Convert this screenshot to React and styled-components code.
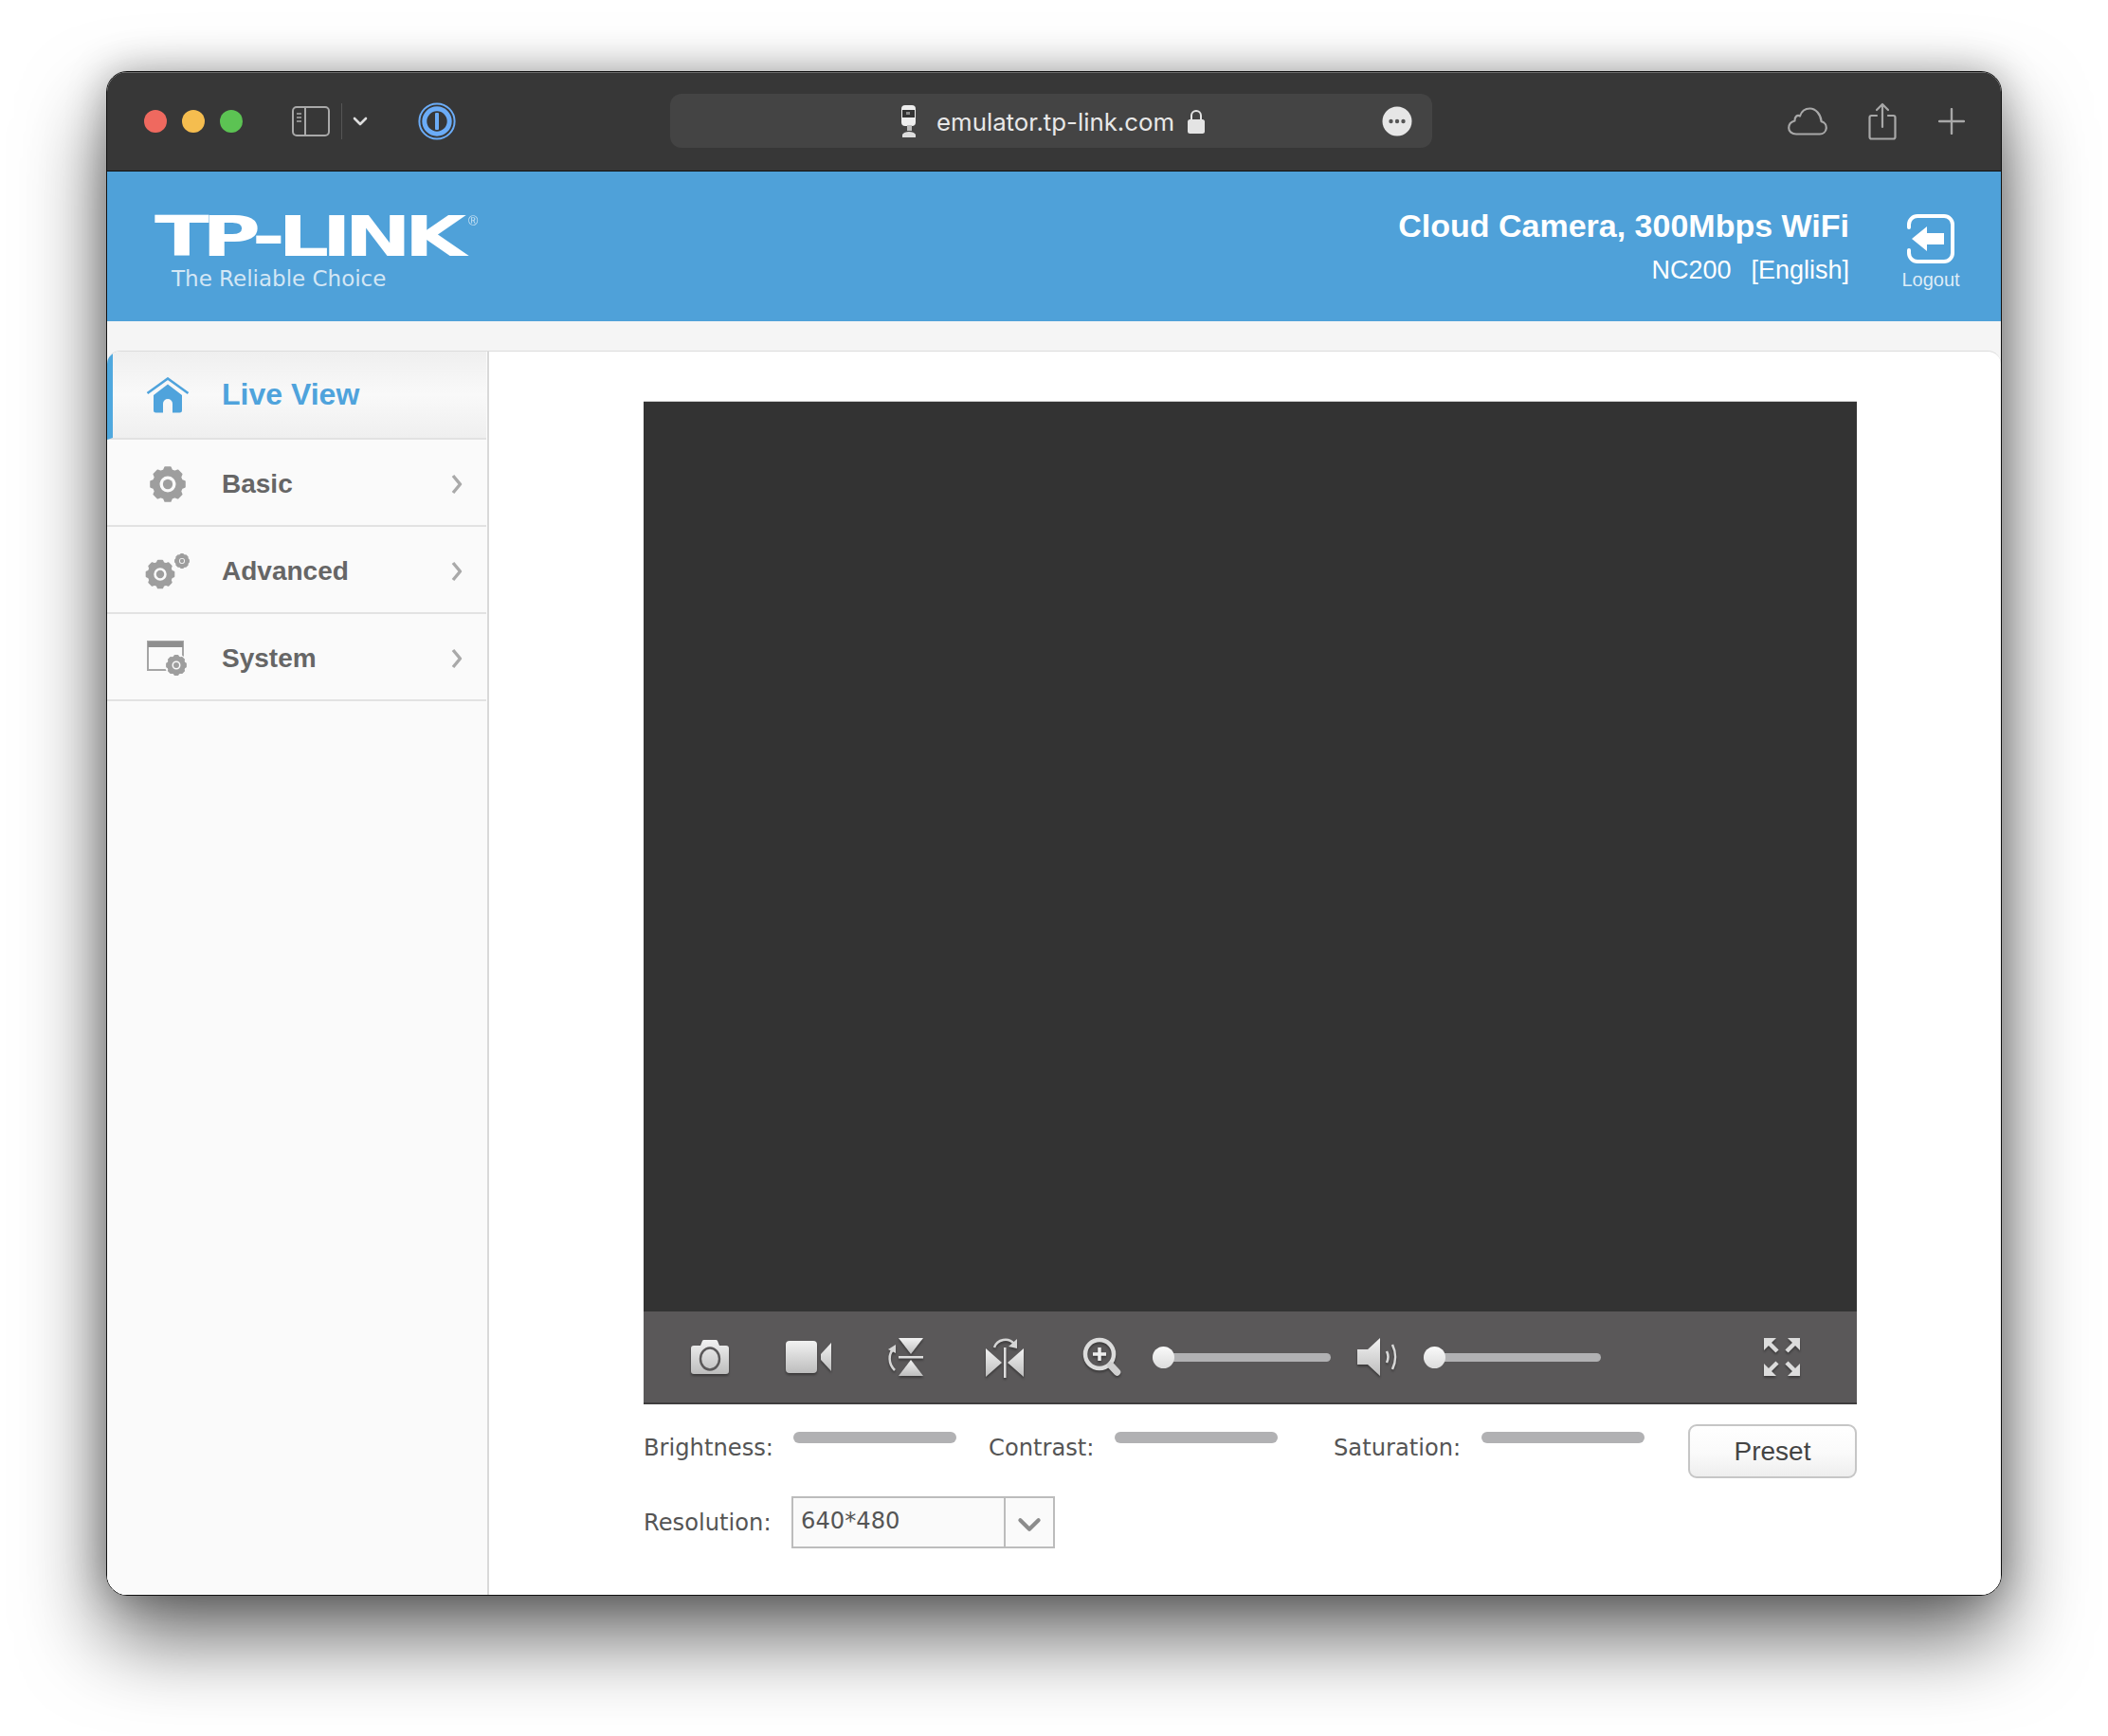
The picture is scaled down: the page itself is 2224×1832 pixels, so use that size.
import React from "react";
import styled, { createGlobalStyle } from "styled-components";

const GlobalStyle = createGlobalStyle`
  html, body { margin: 0; padding: 0; background: #fff; }
  body { font-family: "Liberation Sans", Arial, sans-serif; }
`;

const Page = styled.div`
  width: 2224px;
  height: 1832px;
  padding: 75px 112px 0;
  box-sizing: border-box;
  overflow: hidden;
`;

const Window = styled.div`
  width: 2000px;
  height: 1609px;
  box-sizing: border-box;
  border: 1px solid #111;
  border-radius: 22px;
  overflow: hidden;
  display: flex;
  flex-direction: column;
  background: #f5f5f5;
`;

const Shadowed = styled.div`
  border-radius: 22px;
  box-shadow: 0 44px 88px rgba(0, 0, 0, 0.6), 0 0 40px rgba(0, 0, 0, 0.28);
`;

const TitleBar = styled.div`
  height: 105px;
  flex: none;
  box-sizing: border-box;
  background: #373737;
  border-top: 1px solid #6a6a6a;
  border-bottom: 1px solid #111;
  display: flex;
  align-items: center;
  padding: 0 0 2px 39px;
  position: relative;
`;

const Light = styled.span`
  width: 24px;
  height: 24px;
  border-radius: 50%;
  background: ${(p) => p.$color};
  margin-right: 16px;
`;

const IconSlot = styled.span`
  display: flex;
  align-items: center;
  justify-content: center;
  flex: none;
  margin-left: ${(p) => p.$ml || 0}px;
  svg { display: block; }
`;

const VSep = styled.span`
  width: 1px;
  height: 38px;
  background: #555;
  margin-left: 12px;
`;

const UrlBar = styled.div`
  width: 804px;
  height: 57px;
  margin-left: 226px;
  border-radius: 12px;
  background: #444;
  display: flex;
  align-items: center;
  padding-left: 243px;
  box-sizing: border-box;
  color: #e8e8e8;
`;

const UrlText = styled.span`
  font-family: "Inter", "Liberation Sans", sans-serif;
  font-size: 25.8px;
  margin-left: 20px;
  padding-top: 2px;
`;

const Header = styled.header`
  height: 158px;
  flex: none;
  background: #4fa1d9;
  display: flex;
  align-items: flex-start;
  color: #fff;
  position: relative;
`;

const Logo = styled.div`
  margin: 42px 0 0 50px;
  width: 360px;
  flex: none;
  position: relative;
`;

const LogoMark = styled.div`
  font-family: "DejaVu Sans", sans-serif;
  font-weight: 700;
  font-size: 58px;
  line-height: 55px;
  letter-spacing: -5.3px;
  white-space: nowrap;
  transform: scale(1.46, 1);
  transform-origin: left center;
  width: 224px;
`;

const Registered = styled.span`
  position: absolute;
  left: 331px;
  top: 2px;
  font-size: 14px;
  line-height: 16px;
  opacity: 0.7;
`;

const LogoTag = styled.div`
  font-family: "DejaVu Sans", sans-serif;
  font-size: 23px;
  line-height: 26px;
  margin: 3px 0 0 18px;
  color: rgba(255, 255, 255, 0.75);
`;

const HeadInfo = styled.div`
  margin-left: auto;
  text-align: right;
  padding-top: 37px;
`;

const HeadTitle = styled.div`
  font-weight: 700;
  font-size: 34px;
  line-height: 40px;
`;

const HeadSub = styled.div`
  font-size: 27px;
  line-height: 30px;
  margin-top: 12px;
  span { margin-left: 21px; }
`;

const LogoutBox = styled.div`
  width: 90px;
  margin: 44px 29px 0 41px;
  display: flex;
  flex-direction: column;
  align-items: center;
  font-size: 20px;
  color: rgba(255, 255, 255, 0.82);
  line-height: 22px;
  svg { display: block; margin-bottom: 5px; }
`;

const Strip = styled.div`
  height: 31px;
  flex: none;
  background: #f5f5f5;
`;

const Body = styled.div`
  flex: 1;
  display: flex;
  min-height: 0;
  background: #fff;
  border-top: 1px solid #dcdcdc;
  border-radius: 14px 14px 0 0;
  overflow: hidden;
`;

const Sidebar = styled.nav`
  width: 403px;
  flex: none;
  box-sizing: border-box;
  background: #fafafa;
  border-right: 2px solid #d9d9d9;
`;

const NavRow = styled.div`
  height: ${(p) => (p.$active ? 93 : 92)}px;
  box-sizing: border-box;
  display: flex;
  align-items: center;
  border-bottom: 2px solid #e2e2e2;
  padding: ${(p) => (p.$active ? 0 : 3)}px 24px 0 ${(p) => (p.$active ? 34 : 40)}px;
  margin-right: 1px;
  border-left: ${(p) => (p.$active ? "6px solid #4fa8de" : "0")};
  background: ${(p) =>
    p.$active ? "linear-gradient(#efefef, #f9f9f9 50%, #efefef)" : "transparent"};
`;

const NavIcon = styled.span`
  width: 48px;
  flex: none;
  display: flex;
  justify-content: center;
  svg { display: block; }
`;

const NavLabel = styled.span`
  margin-left: 33px;
  font-weight: 700;
  font-size: ${(p) => (p.$active ? 32 : 28)}px;
  color: ${(p) => (p.$active ? "#4fa3dc" : "#666")};
`;

const NavArrow = styled.span`
  margin-left: auto;
  display: flex;
`;

const Main = styled.main`
  flex: 1;
  padding: 52px 0 0 163px;
`;

const Video = styled.div`
  width: 1280px;
  height: 961px;
  background: #333;
  border-top: 1px solid #d0d0d0;
  box-sizing: border-box;
`;

const Controls = styled.div`
  width: 1280px;
  height: 98px;
  box-sizing: border-box;
  background: #5a5859;
  border-bottom: 2px solid #3f3d3e;
  display: flex;
  align-items: center;
`;

const ToolIcon = styled(IconSlot)`
  svg { filter: drop-shadow(0 2px 1px rgba(0, 0, 0, 0.35)); }
`;

const Track = styled.div`
  width: ${(p) => p.$w}px;
  height: 9px;
  margin-left: ${(p) => p.$ml}px;
  border-radius: 5px;
  background: #b1b1b3;
  position: relative;
`;

const Knob = styled.span`
  position: absolute;
  left: 0;
  top: -7px;
  width: 23px;
  height: 23px;
  border-radius: 50%;
  background: linear-gradient(#fafafa, #dcdcdc);
`;

const Adjust = styled.div`
  display: flex;
  align-items: flex-start;
  padding-top: 21px;
  width: 1280px;
`;

const FieldLabel = styled.span`
  font-family: "DejaVu Sans", sans-serif;
  font-size: 24.2px;
  color: #555;
  line-height: 30px;
  width: ${(p) => p.$w}px;
  flex: none;
  margin-left: ${(p) => p.$ml || 0}px;
  margin-top: ${(p) => p.$mt || 0}px;
`;

const MiniSlider = styled.div`
  width: 172px;
  height: 12px;
  margin-top: 8px;
  flex: none;
  border-radius: 6px;
  background: #b1b1b3;
`;

const PresetButton = styled.button`
  margin-left: auto;
  width: 178px;
  height: 57px;
  box-sizing: border-box;
  border: 2px solid #c6c6c6;
  border-radius: 9px;
  background: linear-gradient(#fff, #fafafa 55%, #eee);
  color: #444;
  font-family: "Liberation Sans", sans-serif;
  font-size: 28px;
  padding: 0;
`;

const ResolutionRow = styled.div`
  display: flex;
  align-items: center;
  margin-top: 19px;
`;

const Select = styled.div`
  width: 278px;
  height: 55px;
  box-sizing: border-box;
  border: 2px solid #bcbcbc;
  background: #fafafa;
  display: flex;
  align-items: stretch;
`;

const SelectValue = styled.span`
  flex: 1;
  font-family: "DejaVu Sans", sans-serif;
  font-size: 24.2px;
  color: #555;
  line-height: 48px;
  padding-left: 8px;
`;

const SelectArrow = styled.span`
  width: 52px;
  flex: none;
  box-sizing: border-box;
  border-left: 2px solid #bcbcbc;
  display: flex;
  align-items: center;
  justify-content: center;
  padding-top: 4px;
`;

// toothed wheel with a round hole, used by the gray nav icons
const gearPath = (cx, cy, R, r, hole, teeth = 8) => {
  const pts = [];
  const step = (Math.PI * 2) / teeth;
  for (let i = 0; i < teeth; i++) {
    const a = i * step - Math.PI / 2;
    [[-0.3, r], [-0.17, R], [0.17, R], [0.3, r]].forEach(([k, rad]) => {
      const t = a + k * step * 1.15;
      pts.push(`${(cx + rad * Math.cos(t)).toFixed(2)} ${(cy + rad * Math.sin(t)).toFixed(2)}`);
    });
  }
  return (
    `M${pts.join("L")}Z` +
    `M${cx - hole} ${cy}a${hole} ${hole} 0 1 0 ${hole * 2} 0a${hole} ${hole} 0 1 0 ${-hole * 2} 0Z`
  );
};

const Gear = ({ cx, cy, R, fill = "#9e9e9e" }) => (
  <g>
    <path d={gearPath(cx, cy, R - 1, R * 0.8, R * 0.5)} fill={fill} fillRule="evenodd" stroke={fill} strokeWidth="2" strokeLinejoin="round" />
    <circle cx={cx} cy={cy} r={R * 0.27} fill={fill} />
  </g>
);

const SidebarIcon = () => (
  <svg width="40" height="32" viewBox="0 0 40 32" fill="none" stroke="#a9a9a9" strokeWidth="2">
    <rect x="1" y="1" width="38" height="30" rx="4" />
    <path d="M14 1v30" />
    <path d="M5 8h5M5 12h5M5 16h5" strokeWidth="1.6" />
  </svg>
);

const Chevron = ({ w = 16, h = 10, color = "#ddd", sw = 2.6 }) => (
  <svg width={w} height={h} viewBox="0 0 16 10" fill="none" stroke={color} strokeWidth={sw} strokeLinecap="round" strokeLinejoin="round">
    <path d="M2 2l6 6 6-6" />
  </svg>
);

const OnePassword = () => (
  <svg width="40" height="40" viewBox="0 0 40 40" fill="none">
    <circle cx="20" cy="20" r="18.6" stroke="#6bacf7" strokeWidth="2" />
    <circle cx="20" cy="20" r="13.2" stroke="#6bacf7" strokeWidth="5" />
    <rect x="18" y="11" width="4" height="18" rx="1" fill="#6bacf7" />
  </svg>
);

const CameraFav = () => (
  <svg width="18" height="36" viewBox="0 0 18 36">
    <rect x="1" y="1" width="15" height="22" rx="4" fill="#eee" />
    <rect x="2" y="6" width="13" height="8" fill="#333" />
    <rect x="6" y="8" width="4" height="3" fill="#888" />
    <path d="M7 22h5v6H7z" fill="#bbb" />
    <path d="M2 32c2-4 12-4 14 0v3H2z" fill="#ddd" />
  </svg>
);

const Lock = () => (
  <svg width="20" height="28" viewBox="0 0 20 28">
    <path d="M5 13V8a5 5 0 0 1 10 0v5" fill="none" stroke="#e4e4e4" strokeWidth="2" />
    <rect x="1" y="12" width="18" height="15" rx="2.5" fill="#e4e4e4" />
  </svg>
);

const MoreDots = () => (
  <svg width="32" height="32" viewBox="0 0 32 32">
    <circle cx="16" cy="16" r="15.5" fill="#e6e6e6" />
    <circle cx="9.5" cy="16" r="2.2" fill="#555" />
    <circle cx="16" cy="16" r="2.2" fill="#555" />
    <circle cx="22.5" cy="16" r="2.2" fill="#555" />
  </svg>
);

const CloudIcon = () => (
  <svg width="42" height="30" viewBox="0 0 42 30" fill="none" stroke="#a8a8a8" strokeWidth="2.2" strokeLinejoin="round">
    <path d="M9 28.5h25a6.8 6.8 0 0 0 1.6-13.4C35 7.5 29.5 1.5 23.5 1.5c-5 0-9 3.3-10.5 8-1-.6-3-.6-4 .4-1 1-1.6 2.6-1.5 4.6C3.5 15.5 1.2 18.5 1.2 22c0 3.8 3.3 6.5 7.8 6.5Z" />
  </svg>
);

const ShareIcon = () => (
  <svg width="30" height="40" viewBox="0 0 30 40" fill="none" stroke="#a8a8a8" strokeWidth="2.2" strokeLinecap="round" strokeLinejoin="round">
    <path d="M9 14H3.5a2 2 0 0 0-2 2v20.5a2 2 0 0 0 2 2h23a2 2 0 0 0 2-2V16a2 2 0 0 0-2-2H21" />
    <path d="M15 26V2M9 8l6-6 6 6" />
  </svg>
);

const PlusIcon = () => (
  <svg width="28" height="28" viewBox="0 0 28 28" stroke="#a8a8a8" strokeWidth="2.4" strokeLinecap="round">
    <path d="M14 1v26M1 14h26" />
  </svg>
);

const LogoutIcon = () => (
  <svg width="52" height="54" viewBox="0 0 52 54" fill="none">
    <path d="M3 15V12a9 9 0 0 1 9-9h28a9 9 0 0 1 9 9v30a9 9 0 0 1-9 9H12a9 9 0 0 1-9-9v-3" stroke="#fff" strokeWidth="4" strokeLinecap="round" />
    <path d="M6 27 22 14v7h18v12H22v7Z" fill="#fff" />
  </svg>
);

const HomeIcon = () => (
  <svg width="46" height="38" viewBox="0 0 46 38">
    <path d="M1.5 17 23 1.5 44.5 17" fill="none" stroke="#4fa3dc" strokeWidth="2.6" />
    <path d="M8 19 23 7.5 38 19v16a2.5 2.5 0 0 1-2.5 2.5H28V28a5 5 0 0 0-10 0v9.5h-7.5A2.5 2.5 0 0 1 8 35Z" fill="#4fa3dc" />
  </svg>
);

const BasicGear = () => (
  <svg width="42" height="42" viewBox="0 0 42 42"><Gear cx={21} cy={21} R={19} /></svg>
);

const AdvancedGear = () => (
  <svg width="48" height="38" viewBox="0 0 48 38">
    <Gear cx={16} cy={22} R={15.5} />
    <Gear cx={39} cy={8} R={8} />
  </svg>
);

const SystemIcon = () => (
  <svg width="44" height="38" viewBox="0 0 44 38">
    <path d="M1 1h37v30H1Z" fill="#fafafa" stroke="#a5a5a5" strokeWidth="2" />
    <path d="M1 1h37v6H1Z" fill="#8f8f8f" />
    <circle cx="31" cy="26" r="12" fill="#fafafa" />
    <Gear cx={31} cy={26} R={11} />
  </svg>
);

const NavChevron = () => (
  <svg width="14" height="22" viewBox="0 0 14 22" fill="none" stroke="#a9a9a9" strokeWidth="3.4" strokeLinejoin="round">
    <path d="M3 2l7.5 9-7.5 9" />
  </svg>
);

const Metal = () => (
  <svg width="0" height="0" style={{ position: "absolute" }} aria-hidden="true">
    <defs>
      <linearGradient id="metal" x1="0" y1="0" x2="0" y2="1">
        <stop offset="0" stopColor="#f2f2f2" />
        <stop offset="1" stopColor="#bdbdbd" />
      </linearGradient>
    </defs>
  </svg>
);

const m = "url(#metal)";

const CameraTool = () => (
  <svg width="42" height="38" viewBox="0 0 42 38">
    <path d="M4 7h7l2-5a2 2 0 0 1 2-1h12a2 2 0 0 1 2 1l2 5h7a3 3 0 0 1 3 3v24a3 3 0 0 1-3 3H4a3 3 0 0 1-3-3V10a3 3 0 0 1 3-3Z" fill={m} />
    <ellipse cx="21" cy="21" rx="10" ry="11.5" fill="none" stroke="#5a5859" strokeWidth="2.4" />
  </svg>
);

const VideoTool = () => (
  <svg width="50" height="36" viewBox="0 0 50 36">
    <rect x="1" y="1" width="33" height="34" rx="4" fill={m} />
    <path d="M38 15 49 3v30L38 21Z" fill={m} />
  </svg>
);

const FlipTool = () => (
  <svg width="42" height="42" viewBox="0 0 42 42">
    <path d="M13 1h26L26 18Z" fill={m} />
    <path d="M13 41h26L26 24Z" fill={m} />
    <rect x="13" y="20" width="26" height="2.5" fill="#ddd" />
    <path d="M8 12c-6 6-6 16 1 23" fill="none" stroke="#d5d5d5" strokeWidth="2.5" />
    <path d="M2 13l8-5v9Z" fill="#d5d5d5" />
  </svg>
);

const MirrorTool = () => (
  <svg width="42" height="44" viewBox="0 0 42 44">
    <path d="M1 13v30l17-15Z" fill={m} />
    <path d="M41 13v30L24 28Z" fill={m} />
    <rect x="20" y="12" width="2.5" height="32" fill="#ddd" />
    <path d="M10 12c3-9 15-11 21-4" fill="none" stroke="#d5d5d5" strokeWidth="2.5" />
    <path d="M34 3v10l-9-2Z" fill="#d5d5d5" />
  </svg>
);

const ZoomTool = () => (
  <svg width="42" height="42" viewBox="0 0 42 42">
    <circle cx="18" cy="18" r="15" fill="none" stroke="#dcdcdc" strokeWidth="4.5" />
    <path d="M18 11v14M11 18h14" stroke="#eee" strokeWidth="3.5" />
    <path d="M30 30l6.5 7" stroke="#cfcfcf" strokeWidth="7.5" strokeLinecap="round" />
  </svg>
);

const SpeakerTool = () => (
  <svg width="46" height="42" viewBox="0 0 46 42">
    <path d="M1 13h11L25 1v40L12 29H1Z" fill={m} />
    <path d="M32 15c2 4 2 8 0 12" fill="none" stroke="#d8d8d8" strokeWidth="2.6" />
    <path d="M38 8c4 8 4 18 0 26" fill="none" stroke="#d8d8d8" strokeWidth="2.6" />
  </svg>
);

const FullTool = () => (
  <svg width="40" height="42" viewBox="0 0 40 42" stroke="#dcdcdc" strokeWidth="4.5" fill="#dcdcdc">
    <path d="M5 5l10 10" />
    <path d="M1 1h13L1 14Z" stroke="none" />
    <path d="M35 5 25 15" />
    <path d="M39 1H26l13 13Z" stroke="none" />
    <path d="M5 37l10-10" />
    <path d="M1 41h13L1 28Z" stroke="none" />
    <path d="M35 37 25 27" />
    <path d="M39 41H26l13-13Z" stroke="none" />
  </svg>
);

const NAV = [
  { label: "Basic", Icon: BasicGear },
  { label: "Advanced", Icon: AdvancedGear },
  { label: "System", Icon: SystemIcon },
];

export default function App() {
  return (
    <Page>
      <GlobalStyle />
      <Metal />
      <Shadowed>
        <Window>
          <TitleBar>
            <Light $color="#ef695f" />
            <Light $color="#f5bd4f" />
            <Light $color="#5cc353" />
            <IconSlot $ml={36}><SidebarIcon /></IconSlot>
            <VSep />
            <IconSlot $ml={11}><Chevron /></IconSlot>
            <IconSlot $ml={53}><OnePassword /></IconSlot>
            <UrlBar>
              <CameraFav />
              <UrlText>emulator.tp-link.com</UrlText>
              <IconSlot $ml={13}><Lock /></IconSlot>
              <IconSlot $ml={186}><MoreDots /></IconSlot>
            </UrlBar>
            <IconSlot $ml={375}><CloudIcon /></IconSlot>
            <IconSlot $ml={43}><ShareIcon /></IconSlot>
            <IconSlot $ml={44}><PlusIcon /></IconSlot>
          </TitleBar>
          <Header>
            <Logo>
              <LogoMark>TP-LINK</LogoMark>
              <Registered>®</Registered>
              <LogoTag>The Reliable Choice</LogoTag>
            </Logo>
            <HeadInfo>
              <HeadTitle>Cloud Camera, 300Mbps WiFi</HeadTitle>
              <HeadSub>NC200<span>[English]</span></HeadSub>
            </HeadInfo>
            <LogoutBox>
              <LogoutIcon />
              Logout
            </LogoutBox>
          </Header>
          <Strip />
          <Body>
            <Sidebar>
              <NavRow $active>
                <NavIcon><HomeIcon /></NavIcon>
                <NavLabel $active>Live View</NavLabel>
              </NavRow>
              {NAV.map(({ label, Icon }) => (
                <NavRow key={label}>
                  <NavIcon><Icon /></NavIcon>
                  <NavLabel>{label}</NavLabel>
                  <NavArrow><NavChevron /></NavArrow>
                </NavRow>
              ))}
            </Sidebar>
            <Main>
              <Video />
              <Controls>
                <ToolIcon $ml={49}><CameraTool /></ToolIcon>
                <ToolIcon $ml={58}><VideoTool /></ToolIcon>
                <ToolIcon $ml={57}><FlipTool /></ToolIcon>
                <ToolIcon $ml={62}><MirrorTool /></ToolIcon>
                <ToolIcon $ml={61}><ZoomTool /></ToolIcon>
                <Track $w={188} $ml={32}><Knob /></Track>
                <ToolIcon $ml={27}><SpeakerTool /></ToolIcon>
                <Track $w={187} $ml={25}><Knob /></Track>
                <ToolIcon $ml={171}><FullTool /></ToolIcon>
              </Controls>
              <Adjust>
                <FieldLabel $w={158} $mt={10}>Brightness:</FieldLabel>
                <MiniSlider />
                <FieldLabel $w={133} $ml={34} $mt={10}>Contrast:</FieldLabel>
                <MiniSlider />
                <FieldLabel $w={156} $ml={59} $mt={10}>Saturation:</FieldLabel>
                <MiniSlider />
                <PresetButton>Preset</PresetButton>
              </Adjust>
              <ResolutionRow>
                <FieldLabel $w={156}>Resolution:</FieldLabel>
                <Select>
                  <SelectValue>640*480</SelectValue>
                  <SelectArrow><Chevron w={26} h={16} color="#8c8c8c" sw={2.6} /></SelectArrow>
                </Select>
              </ResolutionRow>
            </Main>
          </Body>
        </Window>
      </Shadowed>
    </Page>
  );
}
